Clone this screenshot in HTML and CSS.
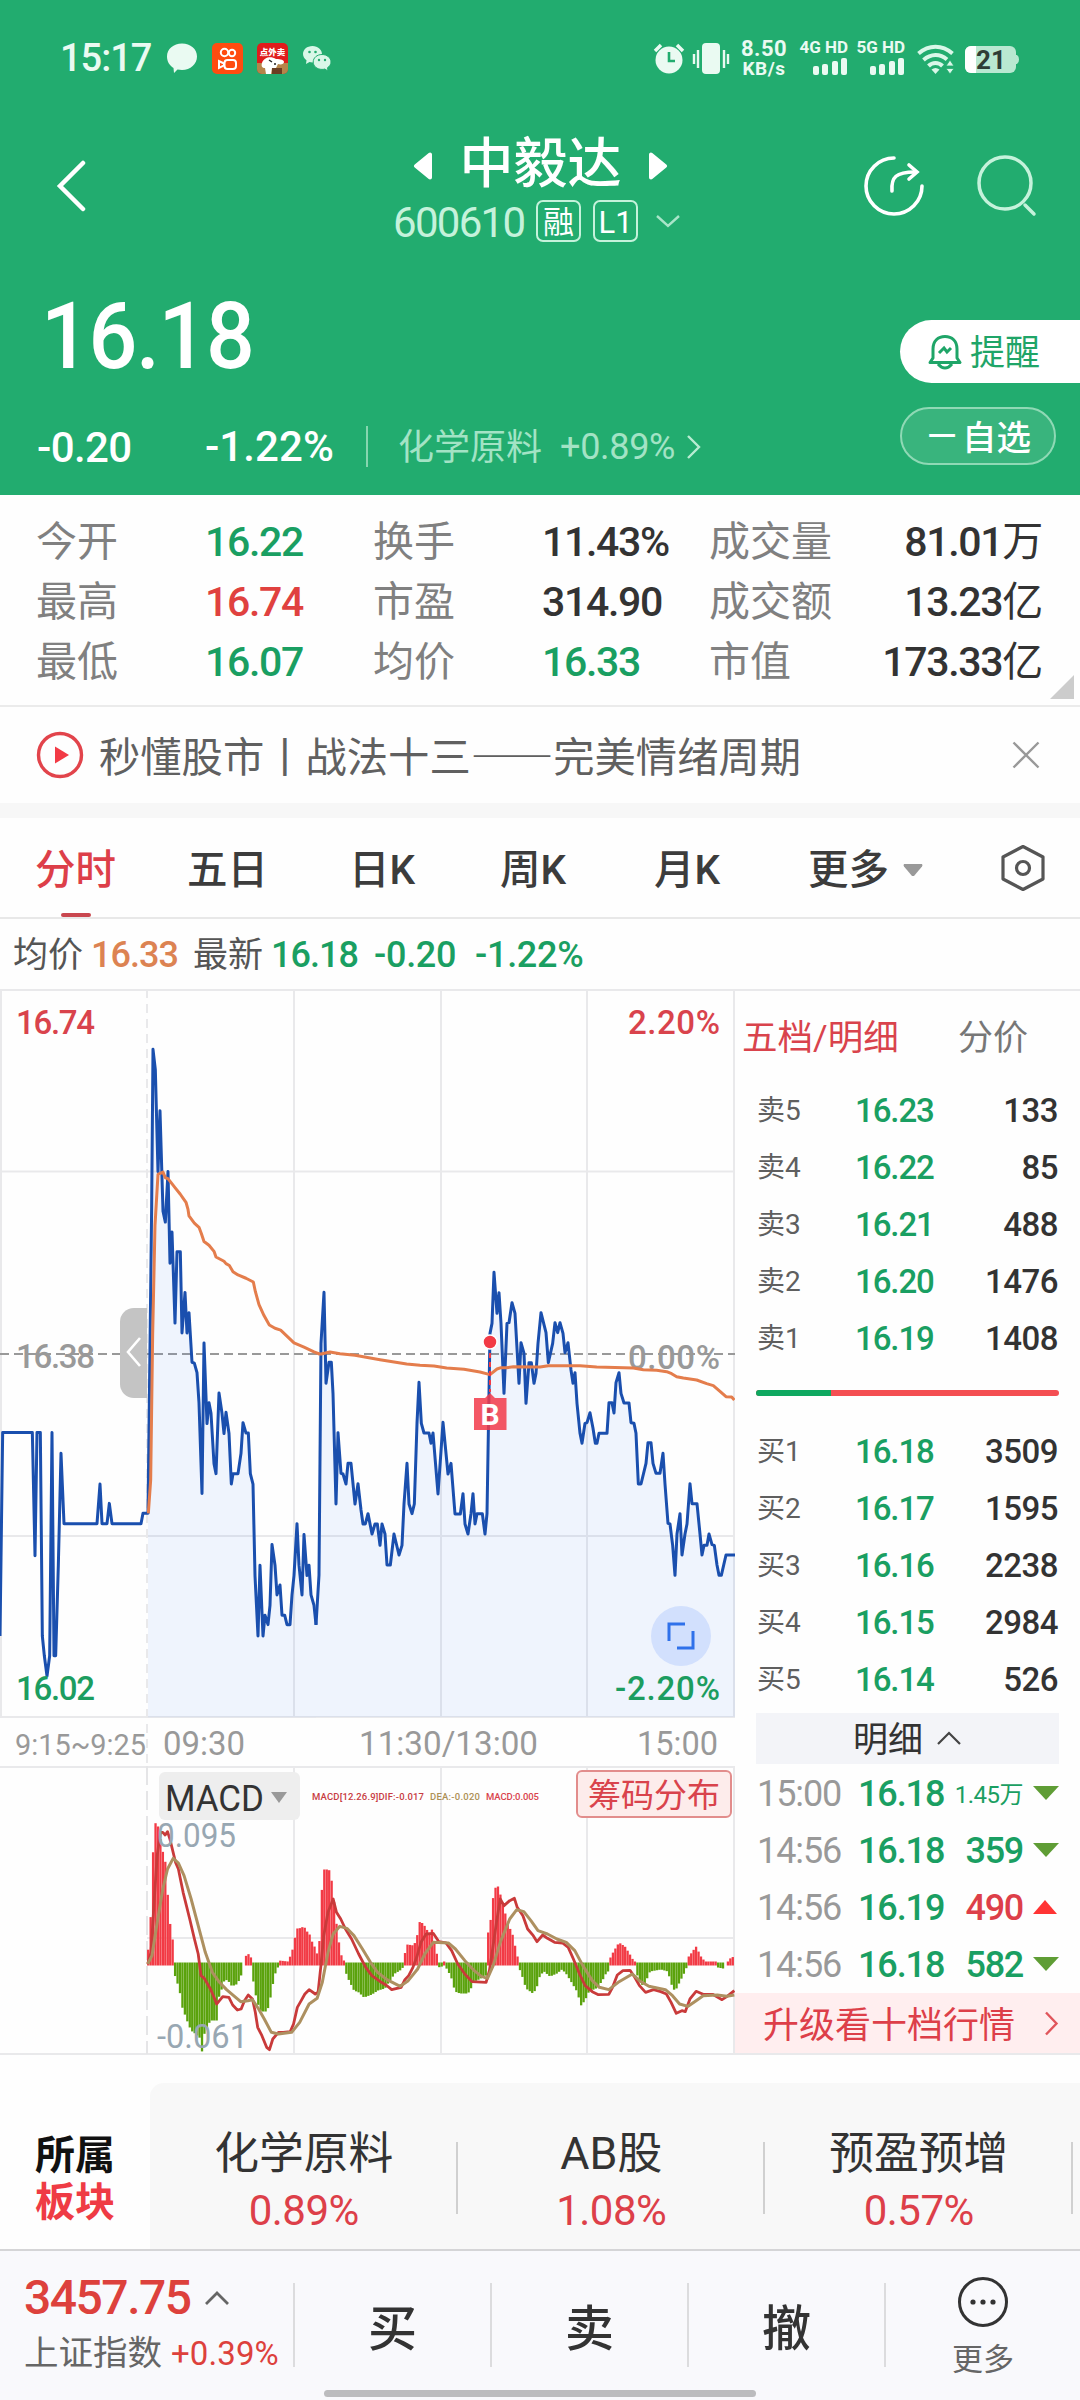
FILE: index.html
```html
<!DOCTYPE html>
<html lang="zh-CN">
<head>
<meta charset="utf-8">
<title>中毅达 600610</title>
<link rel="stylesheet" href="styles.css">
</head>
<body>
<header class="head">
  <div class="status">
    <span class="clock">15:17</span>
    <svg class="s-bubble" width="32" height="32" viewBox="0 0 32 32"><path d="M16 1.500C24.500 1.500 31 7 31 14.500S24.500 28 16 28c-1.500 0-3-.2-4.500-.5L8 31l-.5-5C3.500 23.500 1 19.500 1 14.500 1 7 7.500 1.500 16 1.500z" fill="#eafaf2"/></svg>
    <svg class="s-app" width="31" height="31" viewBox="0 0 31 31"><rect width="31" height="31" rx="5" fill="#ff4c10"/><g fill="none" stroke="#fff" stroke-width="2"><circle cx="12.500" cy="9.500" r="3.700"/><circle cx="20" cy="10" r="3.200"/><rect x="12.500" y="17" width="11.500" height="9" rx="3"/><path d="M12 20.500 7 18v7l5-2.500z"/></g></svg>
    <svg class="s-app" width="31" height="31" viewBox="0 0 31 31"><rect width="31" height="31" rx="5" fill="#e01c1c"/><path d="M0 20h31v6a5 5 0 0 1-5 5H5a5 5 0 0 1-5-5z" fill="#b5854a"/><path d="M5 20c2-6 9-7 14-4 5 0 8 1 8 3s-3 3-6 2l-2 4h-4l-1 6H9l-1-6c-3 0-4-2-3-5z" fill="#fff"/><path d="M12 17l3 2M17 21h2" stroke="#222" stroke-width="1.500"/><path d="M15 25h10v6H15z" fill="#6b3d22"/><text x="15.500" y="11.500" text-anchor="middle" font-size="8.500" font-weight="900" fill="#fff">点外卖</text></svg>
    <svg class="s-wechat" width="30" height="27" viewBox="0 0 30 27"><path d="M10.500 1C5 1 1 4.600 1 9c0 2.600 1.400 4.800 3.500 6.200L4 19l3.500-2c1 .3 2 .4 3 .4C16 17.400 20 13.600 20 9.200S16 1 10.500 1z" fill="#d9f7e8"/><path d="M20 9.500c-5 0-8.800 3.300-8.800 7.500s3.800 7.400 8.800 7.400c1 0 2-.1 2.800-.4l3.200 2-.5-3.300c2.200-1.300 3.500-3.400 3.500-5.700 0-4.200-4-7.500-9-7.500z" fill="#d9f7e8" stroke="#22ac6f"/><g fill="#22ac6f"><circle cx="7.500" cy="7" r="1.300"/><circle cx="13.500" cy="7" r="1.300"/><circle cx="17" cy="15" r="1.200"/><circle cx="23" cy="15" r="1.200"/></g></svg>
    <svg class="s-alarm" width="32" height="32" viewBox="0 0 32 32"><circle cx="16" cy="18" r="13.500" fill="#eafaf2"/><path d="M2 9 8 3M24 3l6 6" stroke="#eafaf2" stroke-width="3.500"/><path d="M16 10v9h6" fill="none" stroke="#22ac6f" stroke-width="2.600"/></svg>
    <svg class="s-vib" width="38" height="32" viewBox="0 0 38 32"><rect x="10" y="0" width="18" height="31" rx="4" fill="#eafaf2"/><path d="M2 11v10M6 7v18M32 7v18M36 11v10" stroke="#eafaf2" stroke-width="2.400"/></svg>
    <span class="speed"><b>8.50</b><b class="unit">KB/s</b></span>
    <span class="sim"><b>4G HD</b><svg width="36" height="17" viewBox="0 0 36 17" fill="#eafaf2"><rect x="1" y="8" width="6" height="9" rx="2"/><rect x="10" y="6" width="6" height="11" rx="2"/><rect x="20" y="3" width="6" height="14" rx="2"/><rect x="29" y="0" width="6" height="17" rx="2"/></svg></span>
    <span class="sim"><b>5G HD</b><svg width="36" height="17" viewBox="0 0 36 17" fill="#eafaf2"><rect x="1" y="8" width="6" height="9" rx="2"/><rect x="10" y="6" width="6" height="11" rx="2"/><rect x="20" y="3" width="6" height="14" rx="2"/><rect x="29" y="0" width="6" height="17" rx="2"/></svg></span>
    <svg class="s-wifi" width="38" height="31" viewBox="0 0 38 31"><g fill="none" stroke="#d9f7e8" stroke-width="4"><path d="M1.500 9.500C12 .5 25 .5 35.500 9.500"/><path d="M6.500 16C14 9.500 23 9.500 30 15.500"/><path d="M11.500 22c4-4 10-4 14 0"/></g><path d="M18.500 30l-4-4.500q4-3 8 0z" fill="#d9f7e8"/><path d="M33 16l4 6h-8zM33 30l4-5.500h-8z" fill="#d9f7e8" stroke="#22ac6f" stroke-width=".8"/></svg>
    <svg class="s-batt" width="56" height="28" viewBox="0 0 56 28"><rect x="0" y="0" width="51" height="27" rx="6" fill="#b9e8d1"/><path d="M6 0h5v27H6a6 6 0 0 1-6-6V6a6 6 0 0 1 6-6z" fill="#fff"/><path d="M51 9h1q2 1 2 4.500T52 18h-1z" fill="#b9e8d1"/><text x="26" y="23" text-anchor="middle" font-size="26" font-weight="700" fill="#2f3d36">21</text></svg>
  </div>
  <div class="nav">
    <svg class="back" width="32" height="52" viewBox="0 0 32 52"><path d="M27 3 4 26l23 23" fill="none" stroke="#fff" stroke-width="4.500" stroke-linecap="round"/></svg>
    <div class="title">
      <div class="name"><svg width="20" height="28" viewBox="0 0 20 28"><path d="M17 2.500v23L3 14z" fill="#fff" stroke="#fff" stroke-width="4" stroke-linejoin="round"/></svg><span>中毅达</span><svg width="20" height="28" viewBox="0 0 20 28"><path d="M3 2.500v23L17 14z" fill="#fff" stroke="#fff" stroke-width="4" stroke-linejoin="round"/></svg></div>
      <div class="code"><span>600610</span><i>融</i><i class="l1">L1</i><svg width="26" height="15" viewBox="0 0 26 15"><path d="M2 2l11 10L24 2" fill="none" stroke="#a9e5c9" stroke-width="2.400"/></svg></div>
    </div>
    <svg class="share" width="62" height="62" viewBox="0 0 62 62" fill="none" stroke="#fff" stroke-width="3.600" stroke-linecap="round"><path d="M31 3a28 28 0 1 0 28 28"/><path d="M29 36c-1-14 4-19 23-19"/><path d="M46 10l8 7-8 7"/></svg>
    <svg class="search" width="62" height="62" viewBox="0 0 62 62" fill="none" stroke="#c5f2db" stroke-width="3.500" stroke-linecap="round"><circle cx="29" cy="28" r="26"/><path d="M49 50l9 9"/></svg>
  </div>
  <div class="quote">
    <div class="left">
      <div class="price">16.18</div>
      <div class="chg"><span class="c1">-0.20</span><span class="c2">-1.22%</span><span class="sector">化学原料</span><span class="spct">+0.89%</span><svg width="16" height="26" viewBox="0 0 16 26"><path d="M2 2l11 11L2 24" fill="none" stroke="#b9ecd2" stroke-width="2.400"/></svg></div>
    </div>
    <div class="right">
      <div class="alert"><svg width="34" height="36" viewBox="0 0 34 36" fill="none" stroke="#1fa568" stroke-width="3"><path d="M5 24V15C5 7 10 2.500 17 2.500S29 7 29 15v9l3 4.500H2z" stroke-linejoin="round"/><path d="M10 30q7 8 14 0" /><path d="M11 19l5-5 3 4 4-4"/></svg><span>提醒</span></div>
      <div class="fav"><span class="minus">一</span><span>自选</span></div>
    </div>
  </div>
</header>

<section class="stats">
  <span>今开</span><b class="g">16.22</b><span>换手</span><b>11.43%</b><span>成交量</span><b class="r-al">81.01<i>万</i></b>
  <span>最高</span><b class="r">16.74</b><span>市盈</span><b>314.90</b><span>成交额</span><b class="r-al">13.23<i>亿</i></b>
  <span>最低</span><b class="g">16.07</b><span>均价</span><b class="g">16.33</b><span>市值</span><b class="r-al">173.33<i>亿</i></b>
  <svg class="fold" width="24" height="24" viewBox="0 0 24 24"><path d="M24 0v24H0z" fill="#ccc"/></svg>
</section>

<section class="news">
  <svg width="48" height="48" viewBox="0 0 48 48"><circle cx="24" cy="24" r="21.500" fill="none" stroke="#e2444b" stroke-width="3.400"/><path d="M19 15.500v17L33 24z" fill="#f23a45"/></svg>
  <span>秒懂股市丨战法十三——完美情绪周期</span>
  <svg width="28" height="28" viewBox="0 0 28 28"><path d="M1.500 1.500l25 25M26.500 1.500l-25 25" stroke="#999" stroke-width="2.400"/></svg>
</section>

<nav class="tabs">
  <span class="on">分时</span><span>五日</span><span>日K</span><span>周K</span><span>月K</span><span>更多<svg width="22" height="14" viewBox="0 0 22 14"><path d="M2 1h18q1 1 0 2.500L12 13h-2L2 3.500Q1 2 2 1z" fill="#999"/></svg></span>
  <svg class="hex" width="46" height="48" viewBox="0 0 46 48" fill="none" stroke="#555" stroke-width="3.200" stroke-linejoin="round"><path d="M23 2.500 43 13v22L23 45.500 3 35V13z"/><circle cx="23" cy="24" r="6.500"/></svg>
</nav>

<div class="legend"><span>均价</span><b class="o">16.33</b><span class="latest">最新</span><b class="g">16.18</b><b class="g d">-0.20</b><b class="g d">-1.22%</b></div>

<main class="market">
  <div class="charts">
    <svg class="trend" width="735" height="777" viewBox="0 0 735 777">
      <g stroke="#e9e9eb" stroke-width="2" fill="none">
        <path d="M0 1h735M0 182.500h735M0 547h735M0 728h735M1 0v728M294 0v728M441 0v728M587 0v728M734 0v728"/>
        <path d="M147 0v778" stroke-dasharray="9 6"/>
      </g>
      <path d="M0 365h735" stroke="#999" stroke-width="1.800" stroke-dasharray="9 5"/>
      <g class="axis grey"><text x="16" y="379" textLength="79">16.38</text><text x="628" y="380" textLength="92">0.00%</text></g>
      <g transform="translate(0 -9) scale(.33333 .47193)">
        <path class="area" d="M444 1562V1130L455 480 459 147 466 190 474 406 480 277 489 490 496 513 504 406 510 600 516 534 525 727 531 576 541 576 546 748 555 662 561 748 567 705 576 810 583 812 591 832 597 896 606 1088 612 769 621 940 627 896 633 918 642 1025 648 1046 657 875 666 918 672 961 678 916 687 961 694 1068 699 1046 714 1046 723 1003 729 938 738 960 745 960 751 1046 759 1068 765 1262 774 1390 780 1240 789 1390 795 1346 804 1366 810 1325 816 1196 825 1240 831 1303 840 1282 846 1346 854 1346 861 1366 870 1366 876 1303 882 1262 891 1152 897 1240 906 1303 912 1175 921 1262 927 1240 933 1303 942 1325 948 1366V1562z"/>
        <path class="line" d="M0 1390 8 959 97 959 105 1220 111 959 121 959 127 1390 133 1432 141 1475 149 1432 156 959 162 1432 167 1432 175 1240 183 1003 192 1152 291 1152 300 1068 306 1152 321 1152 328 1109 336 1152 423 1152 429 1130 444 1130 455 480 459 147 466 190 474 406 480 277 489 490 496 513 504 406 510 600 516 534 525 727 531 576 541 576 546 748 555 662 561 748 567 705 576 810 583 812 591 832 597 896 606 1088 612 769 621 940 627 896 633 918 642 1025 648 1046 657 875 666 918 672 961 678 916 687 961 694 1068 699 1046 714 1046 723 1003 729 938 738 960 745 960 751 1046 759 1068 765 1262 774 1390 780 1240 789 1390 795 1346 804 1366 810 1325 816 1196 825 1240 831 1303 840 1282 846 1346 854 1346 861 1366 870 1366 876 1303 882 1262 891 1152 897 1240 906 1303 912 1175 921 1262 927 1240 933 1303 942 1325 948 1366"/>
      </g>
      <g transform="translate(280 191) scale(.33333)">
        <path class="area" d="M108 1611V1335L117 1185 123 490 132 337 138 610 147 547 154 547 159 640 168 972 174 758 183 880 189 882 198 912 204 850 213 850 225 972 234 911 243 990 249 1032 256 1032 264 1001 276 1062 285 1032 292 1032 300 1096 306 1032 315 1062 321 1155 331 1155 342 1062 357 1125 366 1096 372 972 381 850 387 972 396 1001 403 972 411 730 417 607 424 730 432 759 447 759 453 790 459 759 474 942 489 727 504 882 513 850 525 1002 541 1002 549 941 555 1032 564 1062 573 1001 579 941 585 1032 591 1001 607 1001 615 1062 621 1001 627 640 630 460 636 430 642 277 651 400 657 338 663 430 672 640 681 430 687 428 696 368 705 400 717 610 723 488 732 520 738 670 747 548 754 548 762 610 768 580 774 490 783 398 798 458 805 548 818 490 825 428 833 458 840 428 849 460 855 518 864 488 873 570 879 610 885 578 891 670 900 760 906 790 915 730 921 728 930 698 939 745 946 790 951 790 957 760 981 760 987 668 996 668 1002 699 1008 608 1017 578 1023 640 1032 669 1047 669 1053 728 1062 730 1068 760 1075 912 1083 912 1098 850 1104 788 1113 788 1119 850 1128 880 1140 880 1149 820 1155 912 1164 1030 1170 1032 1178 1096 1185 1186 1191 1062 1200 1001 1206 1125 1215 1062 1221 1032 1230 911 1236 971 1251 971 1260 1062 1266 1125 1272 1096 1281 1096 1287 1062 1296 1094 1303 1096 1311 1155 1317 1186 1324 1186 1338 1125 1365 1125V1611z"/>
        <path class="line" d="M108 1335 117 1185 123 490 132 337 138 610 147 547 154 547 159 640 168 972 174 758 183 880 189 882 198 912 204 850 213 850 225 972 234 911 243 990 249 1032 256 1032 264 1001 276 1062 285 1032 292 1032 300 1096 306 1032 315 1062 321 1155 331 1155 342 1062 357 1125 366 1096 372 972 381 850 387 972 396 1001 403 972 411 730 417 607 424 730 432 759 447 759 453 790 459 759 474 942 489 727 504 882 513 850 525 1002 541 1002 549 941 555 1032 564 1062 573 1001 579 941 585 1032 591 1001 607 1001 615 1062 621 1001 627 640 630 460 636 430 642 277 651 400 657 338 663 430 672 640 681 430 687 428 696 368 705 400 717 610 723 488 732 520 738 670 747 548 754 548 762 610 768 580 774 490 783 398 798 458 805 548 818 490 825 428 833 458 840 428 849 460 855 518 864 488 873 570 879 610 885 578 891 670 900 760 906 790 915 730 921 728 930 698 939 745 946 790 951 790 957 760 981 760 987 668 996 668 1002 699 1008 608 1017 578 1023 640 1032 669 1047 669 1053 728 1062 730 1068 760 1075 912 1083 912 1098 850 1104 788 1113 788 1119 850 1128 880 1140 880 1149 820 1155 912 1164 1030 1170 1032 1178 1096 1185 1186 1191 1062 1200 1001 1206 1125 1215 1062 1221 1032 1230 911 1236 971 1251 971 1260 1062 1266 1125 1272 1096 1281 1096 1287 1062 1296 1094 1303 1096 1311 1155 1317 1186 1324 1186 1338 1125 1365 1125"/>
      </g>
      <path d="M147 319h-13a14 14 0 0 0-14 14v62a14 14 0 0 0 14 14h13z" fill="#c4c4c4"/>
      <path d="M140 349l-12 14 12 14" fill="none" stroke="#fff" stroke-width="2.600"/>
      <g transform="translate(0 -9) scale(.33333 .47193)">
        <path class="avg" d="M445 1130 452 1060 458 750 465 520 474 412 489 407 496 419 504 421 525 440 541 454 549 462 558 471 564 486 567 500 583 515 597 524 604 537 612 554 627 562 642 575 648 587 672 596 678 601 688 605 699 618 714 625 738 632 760 640 766 660 777 688 792 711 808 731 825 738 842 742 860 754 882 769 912 778 942 788 960 793"/>
      </g>
      <g transform="translate(280 191) scale(.33333)">
        <path class="avg" d="M120 523 150 516 180 521 225 526 300 539 380 552 420 556 462 558 500 564 552 568 600 576 630 584 651 567 663 563 680 563 700 560 780 561 805 557 900 557 950 561 1060 564 1090 569 1130 571 1160 575 1175 581 1190 590 1210 594 1250 600 1280 611 1300 617 1320 634 1338 650 1355 651 1363 660"/>
      </g>
      <path d="M490 355v48" stroke="#f23a45" stroke-width="2" stroke-dasharray="5 4"/>
      <circle cx="490" cy="353" r="7" fill="#f23a45" stroke="#fff" stroke-width="1.500"/>
      <path d="M474 409h11l5-5 5 5h11.500v32H474z" fill="#f23a4a" fill-opacity=".85"/>
      <text x="490" y="436" text-anchor="middle" font-size="30" font-weight="700" fill="#fff">B</text>
      <circle cx="681" cy="647" r="30" fill="#d2e0fd"/>
      <path d="M669 652v-17h16M677 659h16v-17" fill="none" stroke="#2f71ea" stroke-width="3"/>
      <g class="axis"><text x="16" y="45" textLength="79">16.74</text><text x="628" y="45" textLength="92">2.20%</text><text class="low" x="16" y="711" textLength="79">16.02</text><text class="low" x="615" y="711" textLength="105">-2.20%</text></g>
      <g class="axis time"><text x="15" y="766" font-size="30" textLength="131" lengthAdjust="spacingAndGlyphs">9:15~9:25</text><text x="163" y="766" textLength="82" lengthAdjust="spacingAndGlyphs">09:30</text><text x="359" y="766" textLength="179" lengthAdjust="spacingAndGlyphs">11:30/13:00</text><text x="637" y="766" textLength="81" lengthAdjust="spacingAndGlyphs">15:00</text></g>
    </svg>
    <svg class="macd" width="735" height="289" viewBox="0 0 735 289">
      <path d="M0 1h735M147 172h588M0 288h735M294 0v288M441 0v288M587 0v288M734 0v288" stroke="#e9e9eb" stroke-width="2"/>
      <path d="M147 0v288" stroke="#e5e5e7" stroke-width="2" stroke-dasharray="19 6"/>
      <g id="bars"></g>
      <g transform="translate(0 -67) scale(.47193 .33333)" fill="none">
        <path class="dif" d="M313 795 320 760 327 600 333 470 340 400 345 400 350 408 355 398 360 420 372 490 378 510 383 545 388 580 395 620 402 660 412 720 420 765 426 830 433 838 446 870 455 900 459 915 465 905 472 893 485 895 493 918 503 933 511 930 518 905 526 888 535 900 541 940 546 985 555 1010 565 1045 571 1052 578 1020 590 1000 600 1000 615 998 622 975 630 925 637 908 646 885 655 872 668 885 674 880 680 800 686 710 695 640 706 600 713 640 722 660 732 690 745 720 760 765 775 805 788 830 808 850 818 858 830 872 850 865 858 842 866 830 875 805 883 775 892 730 903 705 918 703 930 728 945 732 957 755 970 795 985 825 1000 848 1030 850 1037 815 1045 740 1052 670 1060 600 1068 620 1080 605 1090 598 1096 625 1108 650 1118 690 1130 710 1138 728 1150 708 1160 718 1175 730 1192 732 1204 745 1215 780 1228 825 1240 860 1255 878 1268 887 1290 886 1298 865 1308 828 1320 815 1335 814 1345 835 1355 860 1368 880 1385 872 1400 878 1412 885 1422 910 1433 943 1445 935 1452 938 1462 900 1475 877 1490 886 1510 886 1530 902 1540 893 1556 875"/>
        <path class="dea" d="M313 795 322 770 332 680 345 570 355 510 367 478 378 492 390 530 405 600 420 680 435 760 450 820 465 850 480 872 495 890 510 908 525 905 535 902 548 930 560 960 575 1000 590 1005 618 1000 635 970 655 915 672 898 683 850 695 760 706 705 720 682 735 688 750 710 768 750 785 790 800 820 820 842 848 862 865 845 885 810 900 765 918 730 950 732 965 750 985 785 1005 815 1020 832 1033 838 1045 800 1060 730 1080 660 1095 632 1110 638 1125 665 1140 695 1160 705 1180 720 1200 730 1218 755 1235 800 1255 845 1270 865 1290 872 1310 850 1340 825 1355 845 1375 862 1410 872 1425 890 1440 915 1458 922 1475 905 1490 890 1520 888 1540 892 1556 888"/>
      </g>
      <rect x="159" y="6" width="141" height="48" rx="6" fill="#eee"/>
      <text x="165" y="45" font-size="37" fill="#333" textLength="99" lengthAdjust="spacingAndGlyphs">MACD</text>
      <path d="M271 26h16l-8 11z" fill="#999"/>
      <g class="mini"><text x="312" y="34" fill="#c83c42" textLength="112">MACD[12.26.9]DIF:-0.017</text><text x="430" y="34" fill="#ad9055" textLength="50">DEA:-0.020</text><text x="486" y="34" fill="#d9434c" textLength="53">MACD:0.005</text></g>
      <rect x="577" y="5" width="154" height="46" rx="5" fill="#fdeceb" stroke="#e28d8c" stroke-width="2"/>
      <text x="588" y="41" font-size="33" fill="#d9434c">筹码分布</text>
      <g class="axis val"><text x="157" y="81" textLength="79" lengthAdjust="spacingAndGlyphs">0.095</text><text x="157" y="282" textLength="91" lengthAdjust="spacingAndGlyphs">-0.061</text></g>
    </svg>
  </div>
  <aside class="book">
    <div class="btabs"><span class="on">五档/明细</span><span>分价</span></div>
    <div class="lv"><span>卖5</span><b>16.23</b><em>133</em></div>
    <div class="lv"><span>卖4</span><b>16.22</b><em>85</em></div>
    <div class="lv"><span>卖3</span><b>16.21</b><em>488</em></div>
    <div class="lv"><span>卖2</span><b>16.20</b><em>1476</em></div>
    <div class="lv"><span>卖1</span><b>16.19</b><em>1408</em></div>
    <div class="ratio"><i style="width:24.800%"></i></div>
    <div class="lv"><span>买1</span><b>16.18</b><em>3509</em></div>
    <div class="lv"><span>买2</span><b>16.17</b><em>1595</em></div>
    <div class="lv"><span>买3</span><b>16.16</b><em>2238</em></div>
    <div class="lv"><span>买4</span><b>16.15</b><em>2984</em></div>
    <div class="lv"><span>买5</span><b>16.14</b><em>526</em></div>
    <div class="more"><span>明细</span><svg width="26" height="15" viewBox="0 0 26 15"><path d="M2 13 13 2l11 11" fill="none" stroke="#444" stroke-width="2.200"/></svg></div>
    <div class="tick"><span>15:00</span><b>16.18</b><em class="wan">1.45万</em><svg width="26" height="14" viewBox="0 0 26 14"><path d="M0 0h26L13 14z" fill="#5f9d35"/></svg></div>
    <div class="tick"><span>14:56</span><b>16.18</b><em>359</em><svg width="26" height="14" viewBox="0 0 26 14"><path d="M0 0h26L13 14z" fill="#5f9d35"/></svg></div>
    <div class="tick"><span>14:56</span><b>16.19</b><em class="r">490</em><svg width="26" height="14" viewBox="0 0 26 14"><path d="M0 14h24L12 0z" fill="#ff3434"/></svg></div>
    <div class="tick"><span>14:56</span><b>16.18</b><em>582</em><svg width="26" height="14" viewBox="0 0 26 14"><path d="M0 0h26L13 14z" fill="#5f9d35"/></svg></div>
    <div class="upgrade"><span>升级看十档行情</span><svg width="15" height="25" viewBox="0 0 15 25"><path d="M2 1.500 12.500 12.500 2 23.500" fill="none" stroke="#e0555b" stroke-width="2.400"/></svg></div>
  </aside>
</main>

<section class="plates">
  <div class="ptitle"><b>所属</b><b class="r">板块</b></div>
  <div class="plist">
    <div><span>化学原料</span><em>0.89%</em></div>
    <div><span>AB股</span><em>1.08%</em></div>
    <div><span>预盈预增</span><em>0.57%</em></div>
  </div>
</section>

<footer class="bar">
  <div class="index">
    <div class="iv"><b>3457.75</b><svg width="26" height="16" viewBox="0 0 26 16"><path d="M2 14 13 3l11 11" fill="none" stroke="#666" stroke-width="2.800"/></svg></div>
    <div class="in"><span>上证指数</span><b>+0.39%</b></div>
  </div>
  <div class="act">买</div><div class="act">卖</div><div class="act">撤</div>
  <div class="act mo"><svg width="52" height="52" viewBox="0 0 52 52"><circle cx="26" cy="26" r="23.500" fill="none" stroke="#333" stroke-width="3"/><g fill="#333"><circle cx="16" cy="26" r="2.600"/><circle cx="26" cy="26" r="2.600"/><circle cx="36" cy="26" r="2.600"/></g></svg><span>更多</span></div>
  <i class="home"></i>
</footer>
<script src="macd.js"></script>
</body>
</html>
```
FILE: macd.js
```js
// Histogram envelope: each run is a list of [x, height]; positive runs are drawn red, negative green.
const runs = [
  [[147,6],[150,28],[152.500,103],[155,142],[158,138],[163,112],[165.500,102],[167.500,73],[170,42],[172.500,25]],
  [[174,-7],[176,-17],[179,-23],[182,-43],[187,-57],[191,-67],[195,-70],[200.500,-75],[202,-88],[204.500,-70],[207.500,-63],[210.500,-57],[217,-57],[218.500,-35],[221,-28],[224,-18],[227.500,-16],[231,-22],[235.500,-22],[238.500,-18],[242,-10]],
  [[245.500,8],[248,11],[251,7]],
  [[254,-18],[256.500,-37],[261,-48],[266,-48],[269,-43],[271.500,-28],[274,-15],[277,-4]],
  [[279,4],[288,3],[291,10],[293.500,18],[296.500,36],[299,36],[304,38],[307,33],[309,32],[311.500,24],[315,17],[318,8],[319,14],[321,59],[323,95],[329,95],[331,88],[333,75],[335,52],[338,30],[340,14],[343,4]],
  [[345,-7],[349,-17],[354,-27],[359,-29],[364,-34],[372,-31],[378,-27],[385,-25],[388,-20],[395,-10],[400,-7],[403,-4]],
  [[404,7],[407,20],[414,19],[417,28],[420,44],[426,37],[429,30],[432,35],[434,23],[437,10]],
  [[438,-4],[442,-3]],
  [[443,3],[444,3]],
  [[446,-4],[451,-13],[455,-28],[460,-30],[468,-30],[471,-25],[473,-18],[477,-17],[486,-12]],
  [[489,32],[492,55],[494,76],[498,78],[501,68],[504,58],[507,42],[512,32],[514,25],[517,8]],
  [[519,-4],[522,-12],[526,-25],[533,-30],[536.500,-25],[540,-12],[544,-8],[550,-13],[557,-10],[562,-6],[566,-10],[571,-18],[577,-28],[581,-42],[585,-37],[589,-28],[596,-25],[602,-18],[607,-8]],
  [[609,4],[613,12],[619,22],[625,18],[630,10],[634,3]],
  [[636,-8],[641,-22],[645,-20],[650,-8],[661,-6],[668,-8],[671,-20],[675,-28],[680,-18],[685,-8],[687,-3]],
  [[689,8],[696,18],[701,8],[705,3],[715,3]],
  [[718,-4],[723,-5]],
  [[728,3],[731,7],[735,8]]
];
const step = 2.446, zero = 198.500, group = document.getElementById("bars");
const NS = "http://www.w3.org/2000/svg";
for (let x = 148.200; x < 735; x += step) {
  const run = runs.find(r => x >= r[0][0] - 1.200 && x < r[r.length - 1][0] + 1.200);
  if (!run) continue;
  let i = 1;
  while (i < run.length - 1 && run[i][0] < x) i++;
  const [x0, h0] = run[i - 1], [x1, h1] = run[i];
  const t = Math.max(0, Math.min(1, (x - x0) / (x1 - x0)));
  const h = h0 + (h1 - h0) * t, bar = document.createElementNS(NS, "rect");
  bar.setAttribute("x", (x - 1.150).toFixed(2));
  bar.setAttribute("width", 2.300);
  bar.setAttribute("y", h > 0 ? zero - h : zero - 2);
  bar.setAttribute("height", Math.abs(h) + 1);
  bar.setAttribute("fill", h > 0 ? "#f23a45" : "#5aa20c");
  group.appendChild(bar);
}
```
FILE: styles.css
```css
* { box-sizing: border-box; }
body { margin: 0; width: 1080px; height: 2400px; overflow: hidden; background: #fefefe; color: #333; font-family: Roboto, "Noto Sans CJK SC", sans-serif; line-height: 1; display: flex; flex-direction: column; }
svg { display: block; flex: none; }
b { font-weight: 500; }
i, em { font-style: normal; }
span, b { white-space: nowrap; }
.g { color: #1a9f62; }
.r { color: #e0413f; }
.o { color: #dc8352; }

.head { height: 495px; background: #22ac6f; color: #fff; flex: none; }
.status { height: 115px; padding: 41px 0 0 60px; display: flex; align-items: flex-start; color: #eafaf2; }
.clock { width: 106px; font-size: 38px; font-weight: 500; letter-spacing: -1px; line-height: 34px; }
.s-bubble { margin-top: 1px; margin-right: 14px; }
.s-app { margin-top: 2px; margin-right: 14px; }
.s-wechat { margin-top: 4px; margin-right: 321px; }
.s-alarm { margin-top: 1px; }
.s-vib { margin: 2px 0 0 7px; }
.speed { width: 50px; margin: -3px 0 0 9px; display: flex; flex-direction: column; align-items: center; font-size: 22px; line-height: 22px; letter-spacing: .500px; }
.speed .unit { font-size: 19px; line-height: 19px; margin-top: -1px; }
.speed b { font-weight: 700; }
.sim { width: 50px; margin-left: 9px; display: flex; flex-direction: column; align-items: flex-end; gap: 4px; font-size: 17px; line-height: 13px; }
.sim + .sim { margin-left: 7px; }
.sim b { font-weight: 700; }
.s-wifi { margin: 3px 0 0 12px; }
.s-batt { margin: 5px 0 0 10px; }

.nav { height: 165px; display: flex; align-items: flex-start; padding-left: 56px; }
.back { margin-top: 45px; }
.title { width: 340px; margin: 21px 0 0 285px; }
.name { height: 54px; display: flex; align-items: center; justify-content: center; margin-left: -6px; }
.name svg { margin-top: 5px; }
.name span { font-size: 54px; font-weight: 500; margin: 4px 26px 0 27px; }
.code { height: 46px; margin-top: 8px; display: flex; align-items: center; padding-left: 20px; color: #c5f2db; }
.code span { font-size: 42px; letter-spacing: -1.700px; width: 143px; padding-top: 3px; }
.code i { width: 45px; height: 42px; border: 2px solid #c5f2db; border-radius: 7px; font-size: 31px; line-height: 41px; text-align: center; color: #fff; margin-right: 12px; }
.code svg { margin-left: 5px; }
.share { margin: 40px 0 0 150px; }
.search { margin: 40px 0 0 51px; }

.quote { display: flex; justify-content: space-between; height: 215px; }
.price { padding: 10px 0 0 41px; height: 130px; font-size: 93px; font-weight: 500; letter-spacing: -1.500px; line-height: 93px; transform: scaleX(.925); transform-origin: 40px 0; }
.chg { display: flex; align-items: center; height: 72px; padding-top: 1px; }
.c1 { font-size: 42px; font-weight: 500; letter-spacing: -.600px; width: 168px; margin-left: 37px; padding-top: 2px; }
.c2 { font-size: 42px; font-weight: 500; letter-spacing: .100px; width: 163px; height: 41px; border-right: 2px solid #86d6af; }
.sector { font-size: 36px; color: #a3e3c5; margin-left: 30px; width: 162px; padding-top: 2px; }
.spct { font-size: 36px; color: #a3e3c5; letter-spacing: -.300px; width: 126px; }
.right { width: 180px; padding-top: 40px; }
.alert { height: 63px; border-radius: 32px 0 0 32px; background: #fff; display: flex; align-items: center; padding-left: 28px; color: #1fa568; font-size: 35px; gap: 8px; }
.alert span { padding-top: 4px; }
.fav { width: 156px; height: 58px; margin-top: 24px; border: 2px solid #8fd9b5; border-radius: 29px; background: #39b47d; display: flex; align-items: center; padding-left: 26px; font-size: 34.500px; font-weight: 500; }
.fav span { padding-top: 4px; }
.fav .minus { font-size: 28px; margin-right: 6px; }

.stats { position: relative; flex: none; height: 212px; padding: 17px 38px 0 36px; border-bottom: 2px solid #ebebeb; display: grid; grid-template-columns: 169px 168px 169px 167px 130px 1fr; grid-auto-rows: 60px; align-items: center; font-size: 41px; }
.stats span { color: #808080; }
.stats b { letter-spacing: -1.300px; white-space: nowrap; }
.stats i { font-weight: 400; }
.stats .r-al { text-align: right; }
.fold { position: absolute; right: 6px; bottom: 6px; }

.news { flex: none; height: 111px; border-bottom: 15px solid #f7f7f7; display: flex; align-items: center; padding: 0 40px 0 36px; font-size: 41.300px; color: #606060; font-family: "Noto Sans CJK SC", sans-serif; }
.news span { margin: 0 0 0 15px; flex: 1; }

.tabs { position: relative; flex: none; height: 101px; border-bottom: 2px solid #e8e8e8; display: grid; grid-template-columns: 152px 162px 151px 154px 154px 193px 1fr; align-items: center; padding: 5px 0 0 35px; font-size: 40.500px; font-weight: 500; color: #3c3c3c; }
.tabs span { display: flex; align-items: center; }
.tabs span svg { margin-left: 13px; }
.tabs .hex { margin: -5px 0 0 -1px; }
.tabs .on { position: relative; color: #dd3f49; }
.tabs .on::after { content: ""; position: absolute; left: 26px; bottom: -27px; width: 30px; height: 4px; border-radius: 2px; background: #c9474f; }

.legend { flex: none; height: 70px; display: flex; align-items: center; padding: 2px 0 0 13px; font-size: 35px; color: #555; }
.legend b { margin-left: 8px; letter-spacing: -1px; font-size: 36px; width: 85px; }
.legend .d { margin-left: 18px; width: 83px; letter-spacing: -.300px; }
.legend .latest { margin-left: 17px; }

.market { flex: none; height: 1066px; display: flex; }
.charts { width: 735px; }
.charts text { white-space: pre; }
.axis { font-size: 33px; font-weight: 500; fill: #d9434c; }
.axis .low { fill: #1c9d60; }
.grey { fill: #999; }
.time { fill: #999; font-weight: 400; }
.val { fill: #98a7b2; font-weight: 400; }
.mini { font-size: 9.500px; font-weight: 500; }
.area { fill: #3b82f6; fill-opacity: .08; }
.line, .avg, .dif, .dea { fill: none; vector-effect: non-scaling-stroke; stroke-linejoin: round; }
.line { stroke: #1a4fae; stroke-width: 3px; }
.avg { stroke: #e47d4c; stroke-width: 3px; }
.dif { stroke: #c93a3a; stroke-width: 2.800px; }
.dea { stroke: #ad9060; stroke-width: 3px; }

.book { width: 345px; border-top: 2px solid #e9e9eb; border-bottom: 2px solid #e9e9eb; }
.btabs { height: 90px; display: flex; align-items: center; padding-left: 7px; padding-top: 5px; color: #777; }
.btabs span { font-size: 35px; }
.btabs .on { color: #d9434c; width: 216px; font-size: 35.500px; }
.lv { height: 57px; display: flex; align-items: center; padding: 2px 22px 0; font-size: 33px; }
.lv span { font-size: 28px; color: #5f5f5f; width: 98px; }
.lv b { color: #1a9f62; letter-spacing: -1.100px; flex: 1; }
.lv em { font-weight: 500; letter-spacing: -.500px; }
.ratio { height: 6px; margin: 24px 21px 26px; border-radius: 3px; overflow: hidden; background: #f44e52; display: flex; }
.ratio i { background: #0ea860; }
.more { height: 51px; margin: 6px 21px 0; background: #f3f4f8; display: flex; align-items: center; justify-content: center; gap: 13px; font-size: 35px; }
.more span { padding-top: 4px; }
.tick { height: 57px; display: flex; align-items: center; padding: 2px 21px 0 22px; font-size: 36px; color: #1a9f62; letter-spacing: -1.100px; }
.tick svg { margin-top: -2px; }
.tick span { color: #999; width: 101px; }
.tick b { width: 84px; }
.tick em { flex: 1; text-align: right; font-weight: 500; margin-right: 10px; letter-spacing: -1.300px; }
.tick .wan { font-size: 24px; letter-spacing: -.500px; margin-top: 2px; font-weight: 400; white-space: nowrap; }
.tick .r { color: #dd3f49; }
.upgrade { height: 60px; margin-top: 1px; background: #ffeeef; display: flex; align-items: center; padding-left: 28px; color: #dd3f49; font-size: 36px; }
.upgrade span { width: 281px; padding-top: 5px; }

.plates { flex: none; height: 194px; padding-top: 28px; display: flex; }
.ptitle { width: 150px; padding: 49px 0 0 35px; font-size: 40px; line-height: 47px; display: flex; flex-direction: column; color: #111; }
.ptitle b { font-weight: 700; }
.ptitle .r { color: #ef3b44; }
.plist { flex: 1; background: #f8f8f8; border-radius: 14px 0 0 0; display: flex; padding-top: 49px; }
.plist div { width: 307.500px; height: 100px; display: flex; flex-direction: column; align-items: center; font-size: 44.800px; background: linear-gradient(#d0d0d0, #d0d0d0) right 10px / 2px 72px no-repeat; }
.plist em { color: #dd3f49; font-size: 42px; letter-spacing: -.500px; margin-top: 13px; }

.bar { position: relative; flex: 1; background: #f9f9fc; border-top: 2px solid #d5d5d7; display: flex; }
.index { width: 293px; padding: 23px 0 0 24px; }
.iv { display: flex; align-items: center; height: 48px; color: #dd413c; font-size: 48px; letter-spacing: -1.500px; }
.iv svg { margin-left: 13px; }
.in { display: flex; align-items: center; margin-top: 12px; height: 38px; font-size: 34.500px; color: #666; }
.in b { color: #dd413c; font-size: 33px; letter-spacing: .100px; margin-left: 9px; font-weight: 400; }
.act { width: 197px; height: 84px; margin-top: 32px; border-left: 2px solid #dcdcde; display: flex; justify-content: center; align-items: center; font-size: 49px; font-weight: 500; padding-top: 9px; }
.mo { flex-direction: column; width: 196px; padding-top: 0; font-size: 31px; font-weight: 400; color: #666; gap: 16px; }
.home { position: absolute; left: 324px; bottom: 3px; width: 432px; height: 7px; border-radius: 4px; background: #bcbcbe; }
```
